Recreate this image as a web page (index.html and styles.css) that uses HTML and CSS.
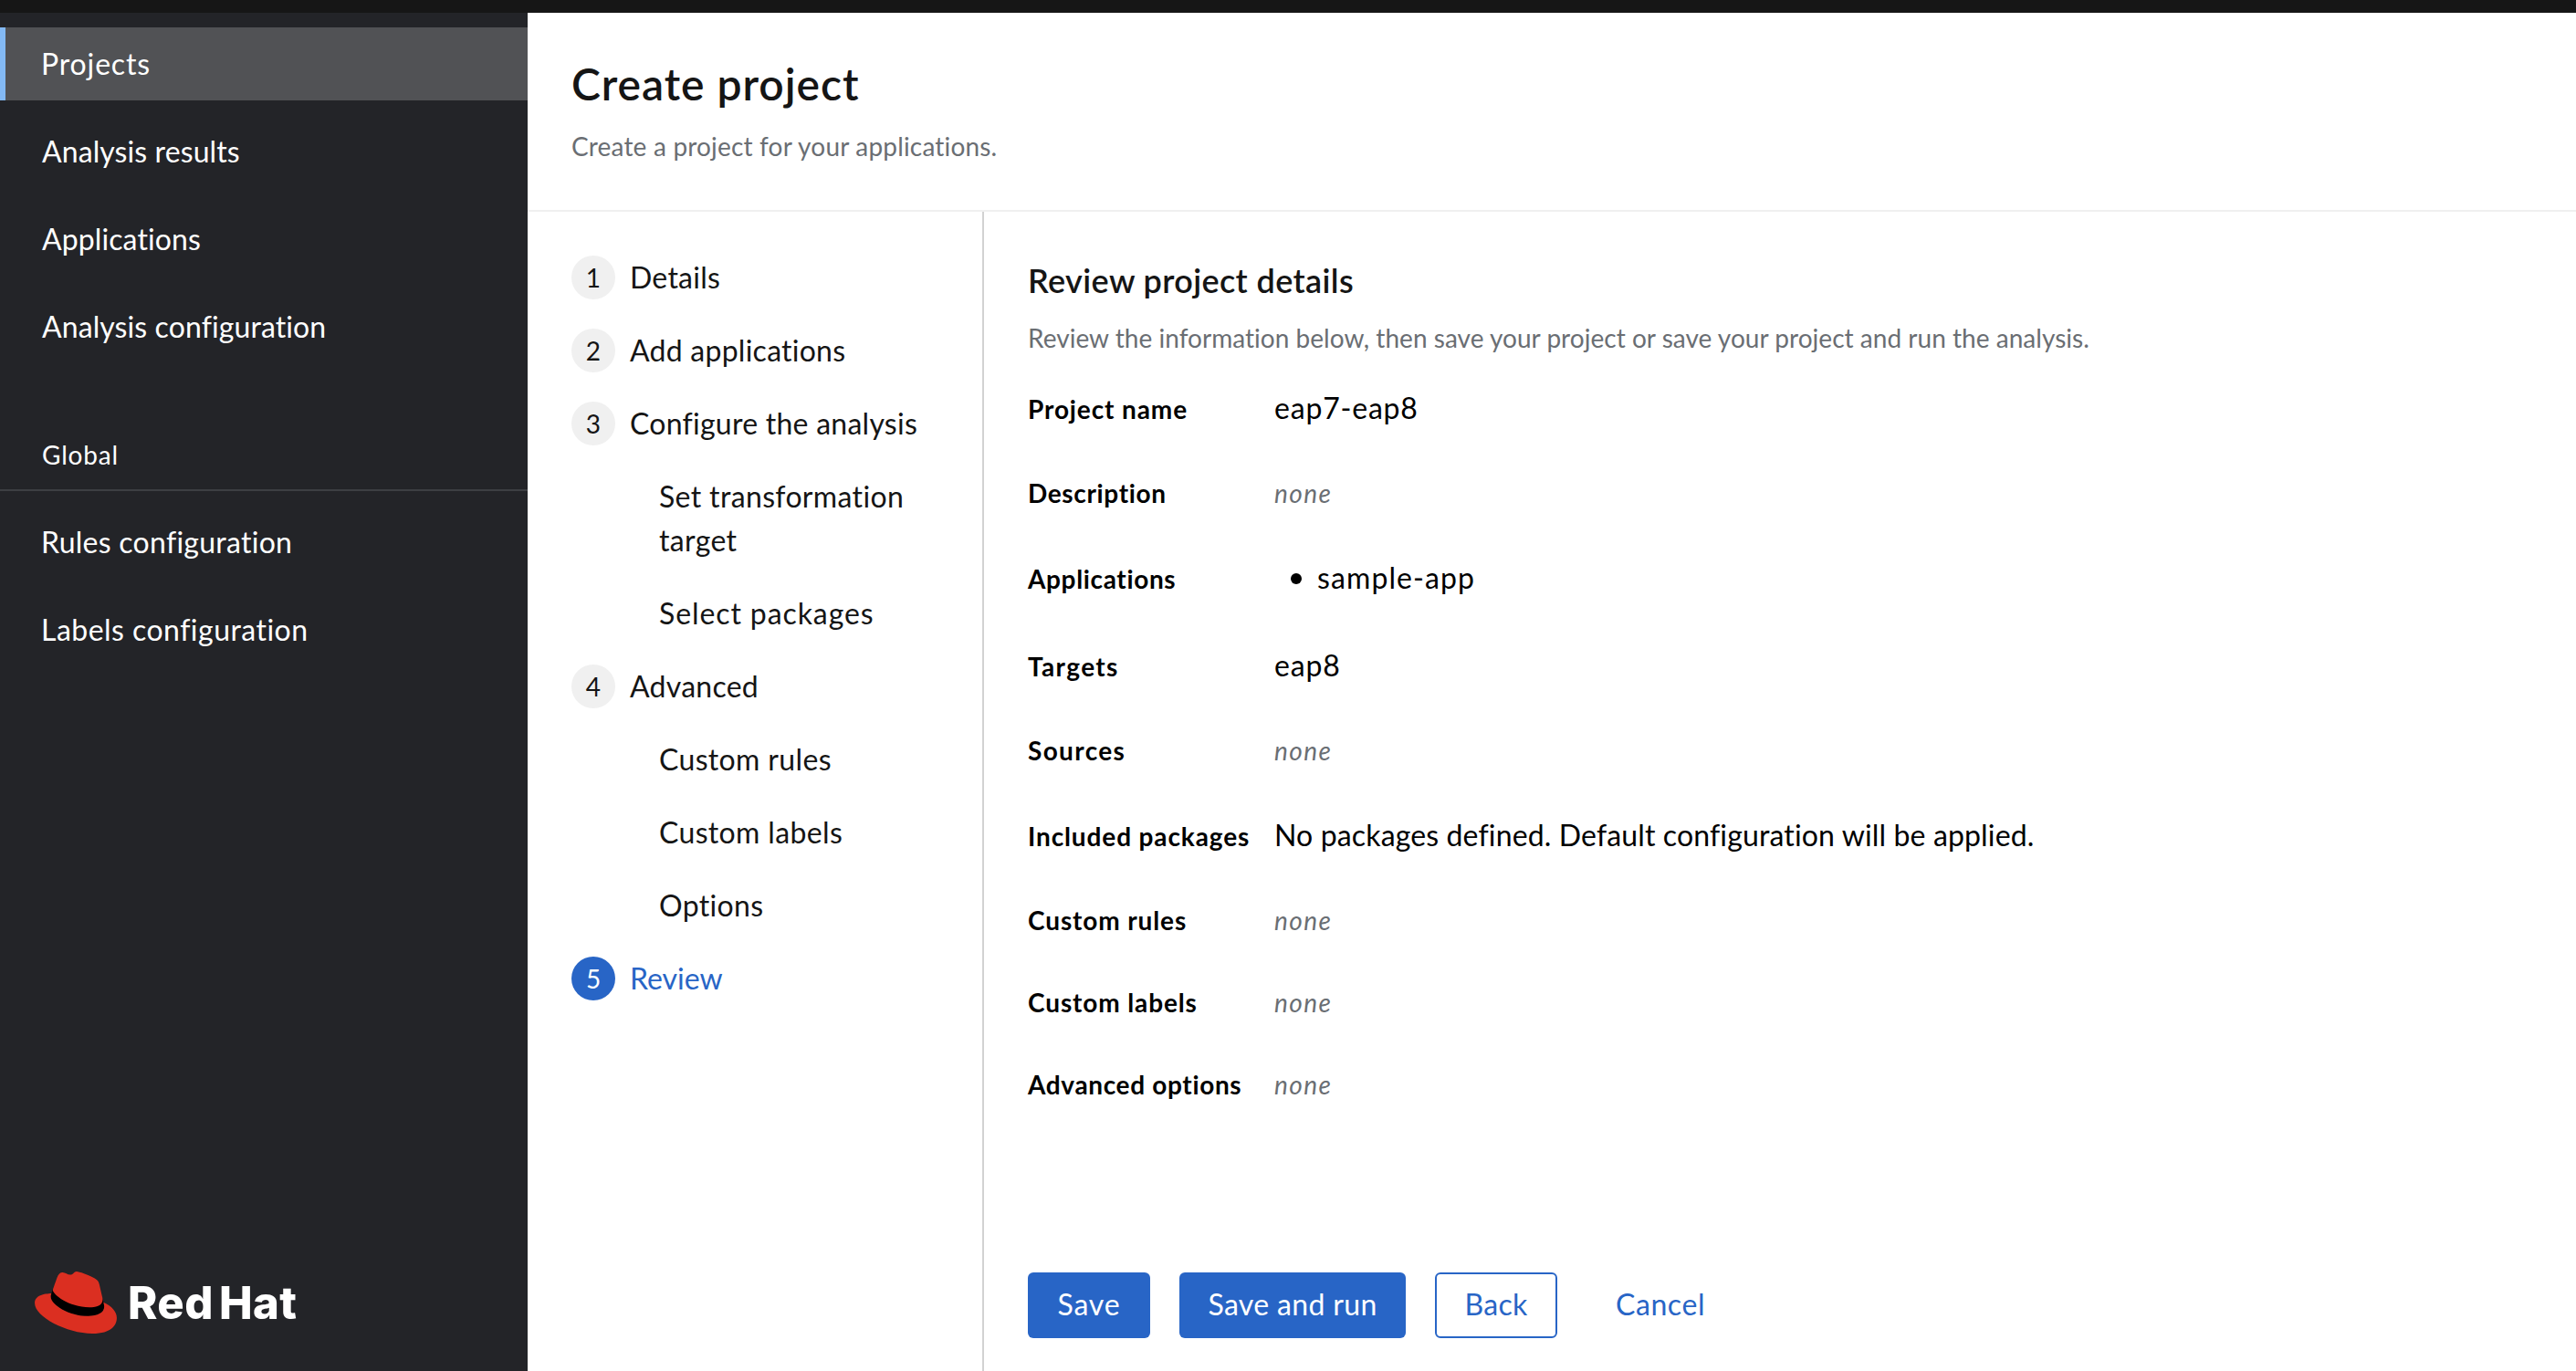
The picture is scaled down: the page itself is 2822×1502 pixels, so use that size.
FILE: index.html
```html
<!DOCTYPE html>
<html lang="en">
<head>
<meta charset="utf-8">
<title>Create project</title>
<link rel="stylesheet" href="styles.css">
</head>
<body>
<div class="topbar"></div>
<div class="shell">
  <aside class="sidebar">
    <nav class="nav">
      <a class="nav-item active wide">Projects</a>
      <a class="nav-item">Analysis results</a>
      <a class="nav-item">Applications</a>
      <a class="nav-item">Analysis configuration</a>
    </nav>
    <h2 class="nav-title">Global</h2>
    <nav class="nav">
      <a class="nav-item rules">Rules configuration</a>
      <a class="nav-item labels">Labels configuration</a>
    </nav>
    <div class="brand">
      <svg class="hat" viewBox="0 2.92 24 18.16">
        <path fill="#000" d="M20.11 11.951c.218 1.032.218 1.14.218 1.277 0 1.765-1.984 2.745-4.593 2.745-5.895.004-11.06-3.451-11.06-5.734a2.326 2.326 0 0 1 .19-.925L5.3 8.17 12 10l7.85.8z"/>
        <path fill="#db2f21" d="M16.009 13.386c1.577 0 3.86-.326 3.86-2.202a1.765 1.765 0 0 0-.04-.431l-.94-4.08c-.216-.898-.406-1.305-1.982-2.093-1.223-.625-3.888-1.658-4.676-1.658-.733 0-.947.946-1.822.946-.842 0-1.467-.706-2.255-.706-.757 0-1.25.515-1.63 1.576 0 0-1.06 2.99-1.197 3.424a.81.81 0 0 0-.028.245c0 1.162 4.577 4.974 10.71 4.974m4.101-1.435c.218 1.032.218 1.14.218 1.277 0 1.765-1.984 2.745-4.593 2.745-5.895.004-11.06-3.451-11.06-5.734a2.326 2.326 0 0 1 .19-.925C2.746 9.415 0 9.794 0 12.217c0 3.969 9.405 8.861 16.851 8.861 5.71 0 7.149-2.582 7.149-4.62 0-1.605-1.387-3.425-3.887-4.512"/>
      </svg>
      <span class="wordmark">Red Hat</span>
    </div>
  </aside>
  <main class="main">
    <header class="header">
      <h1 class="title">Create project</h1>
      <p class="subtitle">Create a project for your applications.</p>
    </header>
    <div class="wizard">
      <ol class="steps">
        <li class="step"><span class="num">1</span><span>Details</span></li>
        <li class="step"><span class="num">2</span><span>Add applications</span></li>
        <li class="step"><span class="num">3</span><span>Configure the analysis</span></li>
        <li class="step sub">Set transformation target</li>
        <li class="step sub wide">Select packages</li>
        <li class="step"><span class="num">4</span><span>Advanced</span></li>
        <li class="step sub">Custom rules</li>
        <li class="step sub">Custom labels</li>
        <li class="step sub">Options</li>
        <li class="step current"><span class="num">5</span><span>Review</span></li>
      </ol>
      <section class="panel">
        <h2 class="panel-title">Review project details</h2>
        <p class="panel-text">Review the information below, then save your project or save your project and run the analysis.</p>
        <dl class="details">
          <dt>Project name</dt><dd class="name">eap7-eap8</dd>
          <dt class="snug">Description</dt><dd class="none">none</dd>
          <dt class="snug">Applications</dt><dd><ul class="apps"><li>sample-app</li></ul></dd>
          <dt class="open">Targets</dt><dd class="name">eap8</dd>
          <dt class="open">Sources</dt><dd class="none">none</dd>
          <dt>Included packages</dt><dd>No packages defined. Default configuration will be applied.</dd>
          <dt>Custom rules</dt><dd class="none">none</dd>
          <dt>Custom labels</dt><dd class="none">none</dd>
          <dt class="snug">Advanced options</dt><dd class="none">none</dd>
        </dl>
        <footer class="actions">
          <button class="btn primary save">Save</button>
          <button class="btn primary run">Save and run</button>
          <button class="btn secondary">Back</button>
          <button class="btn link">Cancel</button>
        </footer>
      </section>
    </div>
  </main>
</div>
</body>
</html>
```
FILE: styles.css
```css
* { box-sizing: border-box; }
html, body { height: 100%; margin: 0; }
body {
  display: flex;
  flex-direction: column;
  font: 400 32px/48px Lato, "Liberation Sans", sans-serif;
  font-variant-ligatures: none;
  letter-spacing: 0.25px;
  color: #151515;
  background: #fff;
  overflow: hidden;
}
h1, h2, p, ol, ul, dl, dd { margin: 0; padding: 0; }
ol, ul { list-style: none; }

.topbar { height: 14px; background: #161616; flex: none; }
.shell { display: flex; flex: 1; min-height: 0; }

.sidebar {
  display: flex;
  flex-direction: column;
  width: 578px;
  padding-top: 16px;
  background: #232428;
  color: #fff;
}
.nav { display: flex; flex-direction: column; gap: 16px; }
.nav-item { height: 80px; padding: 16px 0 0 46px; letter-spacing: 0.1px; }
.nav-item.active {
  padding-left: 39px;
  border-left: 6px solid #83b9f4;
  background: #515255;
}
.nav-item.wide { letter-spacing: 0.85px; }
.nav-item.rules { padding-left: 45px; letter-spacing: 0.27px; }
.nav-item.labels { padding-left: 45px; letter-spacing: 0.47px; }
.nav-title {
  height: 61px;
  margin: 79px 0 16px;
  padding-left: 46px;
  border-bottom: 2px solid #3d3f43;
  font-size: 28px;
  font-weight: 400;
  line-height: 42px;
  letter-spacing: 0.8px;
}
.brand { display: flex; align-items: flex-start; gap: 12px; margin: auto 0 41px 38px; }
.hat { width: 90px; height: 68px; }
.wordmark {
  margin-top: 6px;
  font: 800 49px/58px Inter, sans-serif;
  letter-spacing: 0.4px;
  word-spacing: -5px;
}

.main { display: flex; flex-direction: column; flex: 1; min-width: 0; }
.header { height: 218px; padding: 47px 48px 0; border-bottom: 2px solid #f0f0f0; }
.title { font-size: 48px; font-weight: 600; line-height: 62px; letter-spacing: 0.96px; }
.subtitle, .panel-text { font-size: 28px; line-height: 42px; color: #6a6e73; }
.subtitle { margin-top: 16px; letter-spacing: 0.18px; }

.wizard { display: flex; flex: 1; min-height: 0; }
.steps {
  display: flex;
  flex-direction: column;
  gap: 32px;
  width: 500px;
  padding: 48px 20px 0 48px;
  border-right: 2px solid #d2d2d2;
}
.step { display: flex; gap: 16px; }
.step.sub { padding-left: 96px; letter-spacing: 0.35px; }
.step.sub.wide { letter-spacing: 0.9px; }
.num {
  width: 48px;
  height: 48px;
  border-radius: 50%;
  background: #f0f0f0;
  font-size: 28px;
  text-align: center;
}
.current { color: #2865c6; letter-spacing: 0; }
.current .num { background: #2865c6; color: #fff; }

.panel { display: flex; flex-direction: column; flex: 1; padding: 52px 0 36px 48px; }
.panel-title { font-size: 36px; font-weight: 600; line-height: 46px; letter-spacing: 0.38px; }
.panel-text { margin-top: 19px; letter-spacing: 0.03px; }
.details {
  display: grid;
  grid-template-columns: 270px 1fr;
  grid-template-rows: 93px 93px 96px 93px 93px 93px 90px 90px 48px;
  align-items: baseline;
  margin-top: 32px;
  color: #000;
}
.details dt { font-size: 28px; font-weight: 700; letter-spacing: 0.88px; white-space: nowrap; }
.details dt.open { letter-spacing: 1.35px; }
.details dt.snug { letter-spacing: 0.65px; }
.details dd { letter-spacing: 0.14px; }
.details dd.name { letter-spacing: 0.8px; }
.details dd.none { font-size: 28px; font-style: italic; color: #6a6e73; letter-spacing: 1.4px; }
.apps li { position: relative; padding-left: 47px; letter-spacing: 1.1px; }
.apps li::before {
  content: "";
  position: absolute;
  left: 18px;
  top: 19px;
  width: 12px;
  height: 12px;
  border-radius: 50%;
  background: #000;
}

.actions { display: flex; gap: 32px; margin-top: auto; }
.btn {
  height: 72px;
  padding: 0 0 2px;
  border: 2px solid transparent;
  border-radius: 6px;
  background: none;
  font: inherit;
  letter-spacing: 0.34px;
  color: #2865c6;
}
.primary { background: #2865c6; color: #fff; }
.save, .secondary { width: 134px; }
.save { letter-spacing: 0.8px; }
.run { width: 248px; }
.secondary { border-color: #2865c6; }
.link { width: 162px; letter-spacing: 0.6px; }
```
